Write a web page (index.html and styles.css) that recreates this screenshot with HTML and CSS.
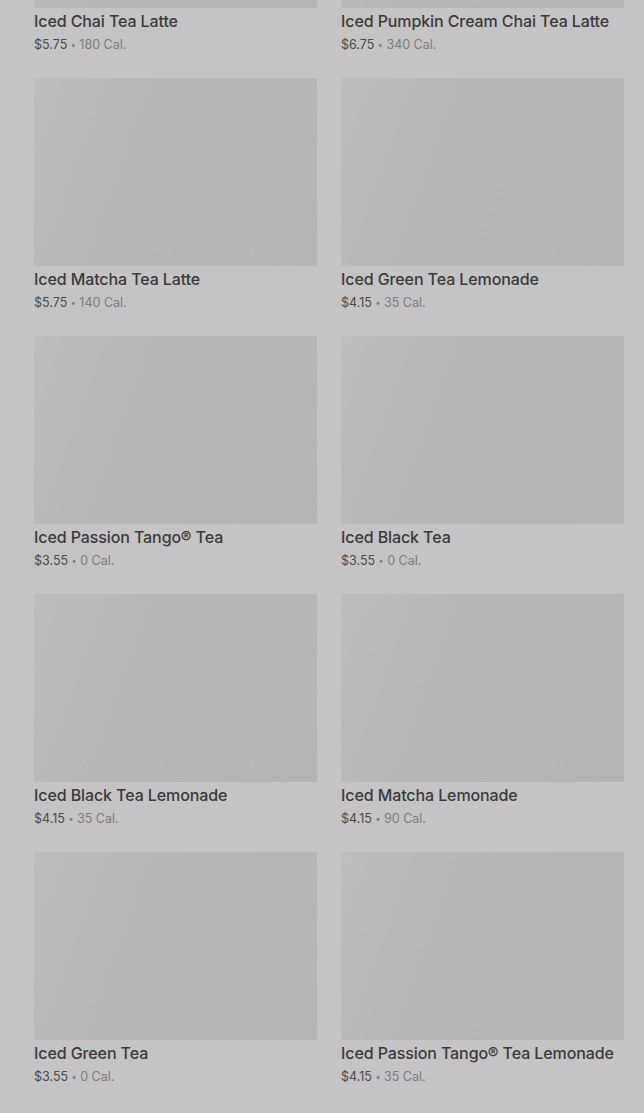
FILE: index.html
```html
<!DOCTYPE html>
<html lang="en">
<head>
  <meta charset="UTF-8" />
  <meta name="viewport" content="width=device-width, initial-scale=1.0"/>
  <title>Iced Tea</title>
  <link rel="stylesheet" href="styles.css">
</head>
<body>
  <div class="menu-grid">
    <div class="product">
      <div class="product-img"></div>
      <h3 class="product-name">Iced Chai Tea Latte</h3>
      <p class="product-meta"><span class="price">$5.75</span> <span class="dot">•</span> 180 Cal.</p>
    </div>
    <div class="product">
      <div class="product-img"></div>
      <h3 class="product-name">Iced Pumpkin Cream Chai Tea Latte</h3>
      <p class="product-meta"><span class="price">$6.75</span> <span class="dot">•</span> 340 Cal.</p>
    </div>
    <div class="product">
      <div class="product-img"></div>
      <h3 class="product-name">Iced Matcha Tea Latte</h3>
      <p class="product-meta"><span class="price">$5.75</span> <span class="dot">•</span> 140 Cal.</p>
    </div>
    <div class="product">
      <div class="product-img"></div>
      <h3 class="product-name">Iced Green Tea Lemonade</h3>
      <p class="product-meta"><span class="price">$4.15</span> <span class="dot">•</span> 35 Cal.</p>
    </div>
    <div class="product">
      <div class="product-img"></div>
      <h3 class="product-name">Iced Passion Tango® Tea</h3>
      <p class="product-meta"><span class="price">$3.55</span> <span class="dot">•</span> 0 Cal.</p>
    </div>
    <div class="product">
      <div class="product-img"></div>
      <h3 class="product-name">Iced Black Tea</h3>
      <p class="product-meta"><span class="price">$3.55</span> <span class="dot">•</span> 0 Cal.</p>
    </div>
    <div class="product">
      <div class="product-img"></div>
      <h3 class="product-name">Iced Black Tea Lemonade</h3>
      <p class="product-meta"><span class="price">$4.15</span> <span class="dot">•</span> 35 Cal.</p>
    </div>
    <div class="product">
      <div class="product-img"></div>
      <h3 class="product-name">Iced Matcha Lemonade</h3>
      <p class="product-meta"><span class="price">$4.15</span> <span class="dot">•</span> 90 Cal.</p>
    </div>
    <div class="product">
      <div class="product-img"></div>
      <h3 class="product-name">Iced Green Tea</h3>
      <p class="product-meta"><span class="price">$3.55</span> <span class="dot">•</span> 0 Cal.</p>
    </div>
    <div class="product">
      <div class="product-img"></div>
      <h3 class="product-name">Iced Passion Tango® Tea Lemonade</h3>
      <p class="product-meta"><span class="price">$4.15</span> <span class="dot">•</span> 35 Cal.</p>
    </div>
  </div>
</body>
</html>
```

FILE: styles.css
```css
body {
  margin: 0;
  background-color: #c4c4c4;
  font-family: Inter, 'Noto Sans', sans-serif;
  color: #3a3a3a;
  overflow: hidden;
}
.menu-grid {
  display: grid;
  grid-template-columns: 283px 283px;
  column-gap: 24px;
  row-gap: 22px;
  padding: 0 20px 0 34px;
  margin-top: -180px;
}
.product-img {
  height: 188px;
  background: linear-gradient(110deg, #bdbdbd 0%, #b7b7b7 35%, #b5b5b5 100%);
}
.product-name {
  margin: 2px 0 0;
  font-size: 16px;
  font-weight: 500;
  line-height: 22px;
  color: #3b3b3b;
  letter-spacing: -0.1px;
}
.product-meta {
  margin: 2px 0 0;
  font-size: 12.5px;
  line-height: 22px;
  color: #7c7c7c;
}
.price {
  color: #4a4a4a;
}
.dot {
  font-size: 9px;
  vertical-align: 1px;
}
```
